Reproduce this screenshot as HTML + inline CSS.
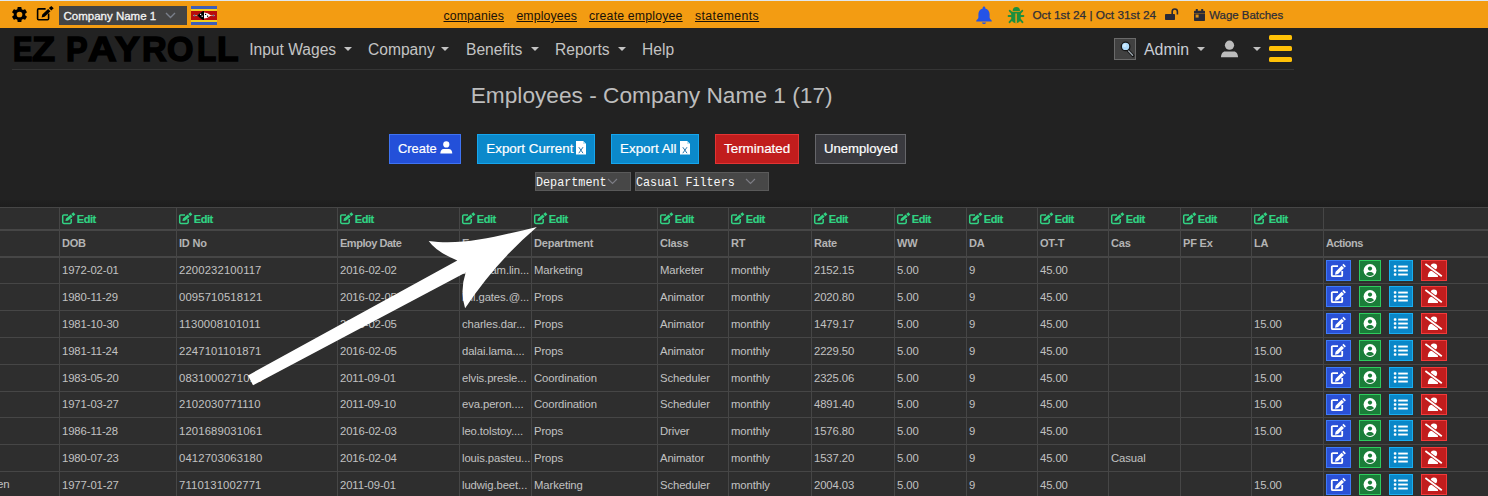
<!DOCTYPE html>
<html><head><meta charset="utf-8"><style>
html,body{margin:0;padding:0;width:1488px;height:496px;overflow:hidden;background:#222;}
body{position:relative;font-family:'Liberation Sans', sans-serif;}
.t{position:absolute;white-space:pre;}
.r{position:absolute;}
svg.r{overflow:visible;}
</style></head><body>
<div class="r" style="left:0px;top:0px;width:1488px;height:1px;background:#dfe7ef"></div>
<div class="r" style="left:0px;top:1px;width:1488px;height:27px;background:#f39c12"></div>
<svg class="r" style="left:9.85px;top:4.5px" width="19" height="19" viewBox="0 0 24 24"><path fill="#000" d="M19.14 12.94c.04-.3.06-.61.06-.94 0-.32-.02-.64-.07-.94l2.03-1.58a.49.49 0 0 0 .12-.61l-1.92-3.32a.49.49 0 0 0-.59-.22l-2.39.96c-.5-.38-1.03-.7-1.62-.94l-.36-2.54a.48.48 0 0 0-.48-.41h-3.84c-.24 0-.43.17-.47.41l-.36 2.54c-.59.24-1.13.57-1.62.94l-2.39-.96a.48.48 0 0 0-.59.22L2.74 8.87c-.12.21-.08.47.12.61l2.03 1.58c-.05.3-.09.63-.09.94s.02.64.07.94l-2.03 1.58a.49.49 0 0 0-.12.61l1.92 3.32c.12.22.37.29.59.22l2.39-.96c.5.38 1.03.7 1.62.94l.36 2.54c.05.24.24.41.48.41h3.84c.24 0 .44-.17.47-.41l.36-2.54c.59-.24 1.13-.56 1.62-.94l2.39.96c.22.08.47 0 .59-.22l1.92-3.32c.12-.22.07-.47-.12-.61l-2.01-1.58zM12 15.6A3.6 3.6 0 1 1 12 8.4a3.6 3.6 0 0 1 0 7.2z"/></svg>
<svg class="r" style="left:36px;top:5px" width="18" height="17" viewBox="0 0 18 17"><path fill="none" stroke="#000" stroke-width="1.6" d="M9.6 3.9H2.6a1 1 0 0 0-1 1V13.8a1 1 0 0 0 1 1H11.6a1 1 0 0 0 1-1V8.6"/><path fill="#000" d="M5.6 12.4L6.29 9.38L12.1 3.9L14.5 6.3L8.65 11.82Z M12.9 3.1L15.3 0.9L17.7 3.3L15.3 5.5Z"/></svg>
<div class="r" style="left:59px;top:6px;width:128px;height:19px;background:#444444"></div>
<div class="t" style="left:63.5px;top:9.59px;font-size:11.5px;line-height:12.846px;color:#f4f4f4;font-weight:normal;font-family:'Liberation Sans', sans-serif;-webkit-text-stroke:0.3px #f4f4f4;">Company Name 1</div>
<svg class="r" style="left:165px;top:12px" width="11" height="7" viewBox="0 0 11 7"><path d="M1 1l4.5 4.5L10 1" fill="none" stroke="#7a7f8a" stroke-width="1.4"/></svg>
<svg class="r" style="left:191px;top:6px" width="26" height="19" viewBox="0 0 26 19"><rect width="26" height="19" fill="#3e5eb9"/><rect y="3" width="26" height="13" fill="#f0cc20"/><rect y="5" width="26" height="9" fill="#b80c0c"/><line x1="2" y1="9.5" x2="24" y2="9.5" stroke="#d8a868" stroke-width="0.9"/><circle cx="3.5" cy="9.5" r="0.9" fill="#5a6aa8"/><circle cx="22.5" cy="9.5" r="0.9" fill="#5a6aa8"/><path d="M6 9.5Q13 3.6 20 9.5Q13 15.4 6 9.5z" fill="#fff"/><path d="M6 9.5Q13 3.6 13 5.4V13.6Q13 15.4 6 9.5z" fill="#000"/><g fill="#000"><rect x="14" y="7.8" width="1.2" height="1.2"/><rect x="16" y="9.6" width="1.2" height="1.2"/></g><g fill="#fff"><rect x="9" y="7.8" width="1.2" height="1.2"/><rect x="10.6" y="9.6" width="1.2" height="1.2"/></g></svg>
<div class="t" style="left:443.5px;top:10.07px;font-size:12.3px;line-height:13.739px;color:#1a1208;font-weight:normal;font-family:'Liberation Sans', sans-serif;text-decoration:underline;text-underline-offset:0.5px;letter-spacing:0.12px;">companies</div>
<div class="t" style="left:516.4px;top:10.07px;font-size:12.3px;line-height:13.739px;color:#1a1208;font-weight:normal;font-family:'Liberation Sans', sans-serif;text-decoration:underline;text-underline-offset:0.5px;letter-spacing:0.12px;">employees</div>
<div class="t" style="left:589px;top:10.07px;font-size:12.3px;line-height:13.739px;color:#1a1208;font-weight:normal;font-family:'Liberation Sans', sans-serif;text-decoration:underline;text-underline-offset:0.5px;letter-spacing:0.18px;">create employee</div>
<div class="t" style="left:695px;top:10.07px;font-size:12.3px;line-height:13.739px;color:#1a1208;font-weight:normal;font-family:'Liberation Sans', sans-serif;text-decoration:underline;text-underline-offset:0.5px;letter-spacing:0.4px;">statements</div>
<svg class="r" style="left:976px;top:6px" width="16" height="18" viewBox="0 0 16 18"><path fill="#2453e8" d="M8 0.5c.8 0 1.3.6 1.3 1.3v.6c2.6.6 4.3 2.9 4.3 5.6v3.2c0 .9.6 1.9 1.6 2.7.4.3.6.6.6 1v.6H0.2v-.6c0-.4.2-.7.6-1 1-.8 1.6-1.8 1.6-2.7V8c0-2.7 1.7-5 4.3-5.6v-.6C6.7 1.1 7.2.5 8 .5z M5.9 16.4h4.2c0 .9-.9 1.5-2.1 1.5s-2.1-.6-2.1-1.5z"/></svg>
<svg class="r" style="left:1004px;top:4px" width="24" height="22" viewBox="0 0 24 22"><g fill="#1e8f3e"><path d="M8.7 6.9A3.65 3.9 0 0 1 16 6.9Z"/><path d="M7.2 7.8H16.8V13.5C16.8 17 14.8 19.2 12 19.2C9.2 19.2 7.2 17 7.2 13.5Z"/></g><path d="M11.35 9.6h1.5v9.6h-1.5z" fill="#e99a18"/><g stroke="#1e8f3e" stroke-width="1.9" stroke-linecap="round" fill="none"><path d="M8 9.2L5.8 6.8M16 9.2L18.2 6.8M7.2 12H4.6M16.8 12H19.4M8 15.4L5.6 18.2M16 15.4L18.4 18.2"/></g></svg>
<div class="t" style="left:1032.4px;top:8.82px;font-size:11.8px;line-height:13.181px;color:#2e2e38;font-weight:normal;font-family:'Liberation Sans', sans-serif;-webkit-text-stroke:0.25px #2e2e38;">Oct 1st 24 | Oct 31st 24</div>
<svg class="r" style="left:1165px;top:8px" width="14" height="13" viewBox="0 0 14 13"><path fill="none" stroke="#2a2a36" stroke-width="1.6" d="M7.2 6.2V3.6a2.6 2.6 0 0 1 5.2 0V6.6"/><rect x="0" y="6" width="10" height="6" rx=".8" fill="#2a2a36"/></svg>
<svg class="r" style="left:1194px;top:8.5px" width="11" height="12" viewBox="0 0 11 12"><g fill="#2a2a36"><rect x="1.8" y="0" width="2" height="2.6"/><rect x="7.2" y="0" width="2" height="2.6"/><path d="M0.8 1.8h9.4a.8.8 0 0 1 .8.8v8.6a.8.8 0 0 1-.8.8H.8a.8.8 0 0 1-.8-.8V2.6a.8.8 0 0 1 .8-.8z"/></g><rect x="1.6" y="5.6" width="3" height="3" fill="#f39c12" opacity="0.9"/><rect x="0" y="4" width="11" height="0.7" fill="#f39c12" opacity="0.5"/></svg>
<div class="t" style="left:1209.2px;top:8.64px;font-size:11.45px;line-height:12.790px;color:#2e2e38;font-weight:normal;font-family:'Liberation Sans', sans-serif;-webkit-text-stroke:0.25px #2e2e38;">Wage Batches</div>
<div class="r" style="left:0px;top:28px;width:1488px;height:468px;background:#222222"></div>
<div class='t' style='left:13.46px;top:29.8px;font-size:35.5px;line-height:39.65px;font-weight:bold;color:#000;-webkit-text-stroke:1.5px #000;transform:scaleX(0.819);transform-origin:0 0'>E</div>
<div class='t' style='left:32.43px;top:29.8px;font-size:35.5px;line-height:39.65px;font-weight:bold;color:#000;-webkit-text-stroke:1.5px #000;transform:scaleX(1.065);transform-origin:0 0'>Z</div>
<div class='t' style='left:65.97px;top:29.8px;font-size:35.5px;line-height:39.65px;font-weight:bold;color:#000;-webkit-text-stroke:1.5px #000;transform:scaleX(0.914);transform-origin:0 0'>P</div>
<div class='t' style='left:87.98px;top:29.8px;font-size:35.5px;line-height:39.65px;font-weight:bold;color:#000;-webkit-text-stroke:1.5px #000;transform:scaleX(1.12);transform-origin:0 0'>A</div>
<div class='t' style='left:115px;top:29.8px;font-size:35.5px;line-height:39.65px;font-weight:bold;color:#000;-webkit-text-stroke:1.5px #000;transform:scaleX(1.05);transform-origin:0 0'>Y</div>
<div class='t' style='left:142.07px;top:29.8px;font-size:35.5px;line-height:39.65px;font-weight:bold;color:#000;-webkit-text-stroke:1.5px #000;transform:scaleX(0.965);transform-origin:0 0'>R</div>
<div class='t' style='left:167.34px;top:29.8px;font-size:35.5px;line-height:39.65px;font-weight:bold;color:#000;-webkit-text-stroke:1.5px #000;transform:scaleX(0.958);transform-origin:0 0'>O</div>
<div class='t' style='left:197.42px;top:29.8px;font-size:35.5px;line-height:39.65px;font-weight:bold;color:#000;-webkit-text-stroke:1.5px #000;transform:scaleX(0.889);transform-origin:0 0'>L</div>
<div class='t' style='left:217.01px;top:29.8px;font-size:35.5px;line-height:39.65px;font-weight:bold;color:#000;-webkit-text-stroke:1.5px #000;transform:scaleX(0.995);transform-origin:0 0'>L</div>
<div class="r" style="left:12px;top:69px;width:1282px;height:1px;background:#353535"></div>
<div class="t" style="left:249.2px;top:40.88px;font-size:15.6px;line-height:17.425px;color:#c4c4c4;font-weight:normal;font-family:'Liberation Sans', sans-serif;">Input Wages</div>
<svg class="r" style="left:343.5px;top:47px" width="8" height="4" viewBox="0 0 8 4"><path d="M0 0H8L4.0 4z" fill="#c4c4c4"/></svg>
<div class="t" style="left:368px;top:40.88px;font-size:15.6px;line-height:17.425px;color:#c4c4c4;font-weight:normal;font-family:'Liberation Sans', sans-serif;">Company</div>
<svg class="r" style="left:441px;top:47px" width="8" height="4" viewBox="0 0 8 4"><path d="M0 0H8L4.0 4z" fill="#c4c4c4"/></svg>
<div class="t" style="left:466px;top:40.88px;font-size:15.6px;line-height:17.425px;color:#c4c4c4;font-weight:normal;font-family:'Liberation Sans', sans-serif;">Benefits</div>
<svg class="r" style="left:531px;top:47px" width="8" height="4" viewBox="0 0 8 4"><path d="M0 0H8L4.0 4z" fill="#c4c4c4"/></svg>
<div class="t" style="left:555px;top:40.88px;font-size:15.6px;line-height:17.425px;color:#c4c4c4;font-weight:normal;font-family:'Liberation Sans', sans-serif;">Reports</div>
<svg class="r" style="left:618px;top:47px" width="8" height="4" viewBox="0 0 8 4"><path d="M0 0H8L4.0 4z" fill="#c4c4c4"/></svg>
<div class="t" style="left:642px;top:40.88px;font-size:15.6px;line-height:17.425px;color:#c4c4c4;font-weight:normal;font-family:'Liberation Sans', sans-serif;">Help</div>
<div class="r" style="left:1114px;top:38px;width:22px;height:22px;background:#414141;box-sizing:border-box;border:1px solid #6a6a6a"></div>
<svg class="r" style="left:1114px;top:38px" width="22" height="22" viewBox="0 0 22 22"><line x1="14.2" y1="12.6" x2="19" y2="17.6" stroke="#151515" stroke-width="3" stroke-linecap="round"/><line x1="14.2" y1="12.6" x2="18.6" y2="17.2" stroke="#9aa4ac" stroke-width="1.4" stroke-linecap="round"/><circle cx="11.6" cy="8.4" r="4.3" fill="#b0dcfc" stroke="#151515" stroke-width="1.3"/><circle cx="10.6" cy="7.4" r="1.6" fill="#e0f2ff" opacity=".7"/></svg>
<div class="t" style="left:1144px;top:40.61px;font-size:15.9px;line-height:17.760px;color:#c8ccd4;font-weight:normal;font-family:'Liberation Sans', sans-serif;">Admin</div>
<svg class="r" style="left:1197px;top:47px" width="8" height="4" viewBox="0 0 8 4"><path d="M0 0H8L4.0 4z" fill="#c0c0c0"/></svg>
<svg class="r" style="left:1221px;top:40px" width="17" height="18" viewBox="0 0 17 18"><circle cx="8.5" cy="5.2" r="4.6" fill="#bcbcbc"/><path d="M0 17.2c0-3.4 1.8-5.8 4-5.8h9c2.2 0 4 2.4 4 5.8z" fill="#bcbcbc"/></svg>
<svg class="r" style="left:1253px;top:47px" width="8" height="4" viewBox="0 0 8 4"><path d="M0 0H8L4.0 4z" fill="#c0c0c0"/></svg>
<div class="r" style="left:1269px;top:35.2px;width:23px;height:4.6px;background:#ffc107;border-radius:1.5px"></div>
<div class="r" style="left:1269px;top:46.3px;width:23px;height:4.6px;background:#ffc107;border-radius:1.5px"></div>
<div class="r" style="left:1269px;top:57.3px;width:23px;height:4.6px;background:#ffc107;border-radius:1.5px"></div>
<div class="t" style="left:470.7px;top:83.06px;font-size:22.7px;line-height:25.356px;color:#bdbdbd;font-weight:normal;font-family:'Liberation Sans', sans-serif;">Employees - Company Name 1 (17)</div>
<div class="r" style="left:389px;top:134px;width:72px;height:30px;background:#2350d9;box-sizing:border-box;border:1px solid #3f73f2"></div>
<div class="t" style="left:398px;top:142.33px;font-size:12.9px;line-height:14.409px;color:#fff;font-weight:normal;font-family:'Liberation Sans', sans-serif;-webkit-text-stroke:0.2px #fff;">Create</div>
<svg class="r" style="left:440px;top:141px" width="13" height="13" viewBox="0 0 13 13"><circle cx="6.3" cy="3.4" r="3.1" fill="#fff"/><path d="M0.3 12.6c0-2.8 1.4-4.6 3.4-4.6h5.2c2 0 3.4 1.8 3.4 4.6z" fill="#fff"/></svg>
<div class="r" style="left:477px;top:134px;width:118px;height:30px;background:#0b89cb;box-sizing:border-box;border:1px solid #15a6ee"></div>
<div class="t" style="left:486.3px;top:141.87px;font-size:13.4px;line-height:14.968px;color:#fff;font-weight:normal;font-family:'Liberation Sans', sans-serif;-webkit-text-stroke:0.2px #fff;">Export Current</div>
<svg class="r" style="left:576.3px;top:141.4px" width="10" height="13.5" viewBox="0 0 10 13.5"><path d="M0 0h7L10 3v10.5H0z" fill="#fff"/><path d="M7 0v3h3" fill="#bfe6f5"/><path d="M2.8 6.2l4.2 6M7 6.2L2.8 12.2" stroke="#2b78ad" stroke-width="1"/></svg>
<div class="r" style="left:611px;top:134px;width:88px;height:30px;background:#0b89cb;box-sizing:border-box;border:1px solid #15a6ee"></div>
<div class="t" style="left:620px;top:141.87px;font-size:13.4px;line-height:14.968px;color:#fff;font-weight:normal;font-family:'Liberation Sans', sans-serif;-webkit-text-stroke:0.2px #fff;">Export All</div>
<svg class="r" style="left:680.3px;top:141.4px" width="10" height="13.5" viewBox="0 0 10 13.5"><path d="M0 0h7L10 3v10.5H0z" fill="#fff"/><path d="M7 0v3h3" fill="#bfe6f5"/><path d="M2.8 6.2l4.2 6M7 6.2L2.8 12.2" stroke="#2b78ad" stroke-width="1"/></svg>
<div class="r" style="left:715px;top:134px;width:84px;height:30px;background:#c11d1d;box-sizing:border-box;border:1px solid #e33434"></div>
<div class="t" style="left:724px;top:141.87px;font-size:13.4px;line-height:14.968px;color:#fff;font-weight:normal;font-family:'Liberation Sans', sans-serif;-webkit-text-stroke:0.2px #fff;">Terminated</div>
<div class="r" style="left:815px;top:134px;width:91px;height:30px;background:#3a3a3f;box-sizing:border-box;border:1px solid #66666a"></div>
<div class="t" style="left:824px;top:142.10px;font-size:13.15px;line-height:14.689px;color:#fff;font-weight:normal;font-family:'Liberation Sans', sans-serif;-webkit-text-stroke:0.2px #fff;">Unemployed</div>
<div class="r" style="left:535px;top:172px;width:96px;height:19px;background:#474747;box-sizing:border-box;border:1px solid #5a5a5a"></div>
<div class="t" style="left:536px;top:174.83px;font-size:13.3px;line-height:15.066px;color:#f8f8f8;font-weight:normal;font-family:'Liberation Mono', monospace;transform:scaleX(0.884);transform-origin:0 0;">Department</div>
<svg class="r" style="left:607px;top:178px" width="11" height="7" viewBox="0 0 11 7"><path d="M1 1l4.5 4.5L10 1" fill="none" stroke="#7d7d85" stroke-width="1.2"/></svg>
<div class="r" style="left:635px;top:172px;width:134px;height:19px;background:#474747;box-sizing:border-box;border:1px solid #5a5a5a"></div>
<div class="t" style="left:636.2px;top:174.83px;font-size:13.3px;line-height:15.066px;color:#f8f8f8;font-weight:normal;font-family:'Liberation Mono', monospace;transform:scaleX(0.884);transform-origin:0 0;">Casual Filters</div>
<svg class="r" style="left:745px;top:178px" width="11" height="7" viewBox="0 0 11 7"><path d="M1 1l4.5 4.5L10 1" fill="none" stroke="#7d7d85" stroke-width="1.2"/></svg>
<div class="r" style="left:0px;top:200px;width:1488px;height:7px;background:linear-gradient(#212121,#1d1d1d)"></div>
<div class="r" style="left:0px;top:207px;width:1488px;height:289px;background:#2e2e2e"></div>
<div class="r" style="left:0px;top:207px;width:1488px;height:1px;background:#464646"></div>
<div class="r" style="left:0px;top:229px;width:1488px;height:2px;background:#464646"></div>
<div class="r" style="left:0px;top:256px;width:1488px;height:2px;background:#464646"></div>
<div class="r" style="left:0px;top:283px;width:1488px;height:1px;background:#464646"></div>
<div class="r" style="left:0px;top:310px;width:1488px;height:1px;background:#464646"></div>
<div class="r" style="left:0px;top:337px;width:1488px;height:1px;background:#464646"></div>
<div class="r" style="left:0px;top:364px;width:1488px;height:1px;background:#464646"></div>
<div class="r" style="left:0px;top:391px;width:1488px;height:1px;background:#464646"></div>
<div class="r" style="left:0px;top:417px;width:1488px;height:1px;background:#464646"></div>
<div class="r" style="left:0px;top:444px;width:1488px;height:1px;background:#464646"></div>
<div class="r" style="left:0px;top:471px;width:1488px;height:1px;background:#464646"></div>
<div class="r" style="left:59px;top:207px;width:1px;height:289px;background:#464646"></div>
<div class="r" style="left:176px;top:207px;width:1px;height:289px;background:#464646"></div>
<div class="r" style="left:337px;top:207px;width:1px;height:289px;background:#464646"></div>
<div class="r" style="left:459px;top:207px;width:1px;height:289px;background:#464646"></div>
<div class="r" style="left:531px;top:207px;width:1px;height:289px;background:#464646"></div>
<div class="r" style="left:657px;top:207px;width:1px;height:289px;background:#464646"></div>
<div class="r" style="left:728px;top:207px;width:1px;height:289px;background:#464646"></div>
<div class="r" style="left:811px;top:207px;width:1px;height:289px;background:#464646"></div>
<div class="r" style="left:894px;top:207px;width:1px;height:289px;background:#464646"></div>
<div class="r" style="left:966px;top:207px;width:1px;height:289px;background:#464646"></div>
<div class="r" style="left:1037px;top:207px;width:1px;height:289px;background:#464646"></div>
<div class="r" style="left:1108px;top:207px;width:1px;height:289px;background:#464646"></div>
<div class="r" style="left:1180px;top:207px;width:1px;height:289px;background:#464646"></div>
<div class="r" style="left:1251px;top:207px;width:1px;height:289px;background:#464646"></div>
<div class="r" style="left:1323px;top:207px;width:1px;height:289px;background:#464646"></div>
<svg class="r" style="left:62px;top:212px" width="14" height="12" viewBox="0 0 14 12"><path fill="none" stroke="#31d283" stroke-width="1.5" d="M6 2.9H1.9a1.2 1.2 0 0 0-1.2 1.2V10.2a1.2 1.2 0 0 0 1.2 1.2H8a1.2 1.2 0 0 0 1.2-1.2V7"/><g transform="translate(0 0.5)"><path fill="#31d283" d="M3.4 8.4L3.96 5.96L8.69 1.96L10.63 4.26L5.9 8.26Z M9.31 1.45L11.43-0.35L13.37 1.95L11.25 3.75Z"/></g></svg>
<div class="t" style="left:76.8px;top:212.54px;font-size:11px;line-height:12.287px;color:#31d283;font-weight:bold;font-family:'Liberation Sans', sans-serif;letter-spacing:-0.45px;-webkit-text-stroke:0.2px #31d283;">Edit</div>
<svg class="r" style="left:179px;top:212px" width="14" height="12" viewBox="0 0 14 12"><path fill="none" stroke="#31d283" stroke-width="1.5" d="M6 2.9H1.9a1.2 1.2 0 0 0-1.2 1.2V10.2a1.2 1.2 0 0 0 1.2 1.2H8a1.2 1.2 0 0 0 1.2-1.2V7"/><g transform="translate(0 0.5)"><path fill="#31d283" d="M3.4 8.4L3.96 5.96L8.69 1.96L10.63 4.26L5.9 8.26Z M9.31 1.45L11.43-0.35L13.37 1.95L11.25 3.75Z"/></g></svg>
<div class="t" style="left:193.8px;top:212.54px;font-size:11px;line-height:12.287px;color:#31d283;font-weight:bold;font-family:'Liberation Sans', sans-serif;letter-spacing:-0.45px;-webkit-text-stroke:0.2px #31d283;">Edit</div>
<svg class="r" style="left:340px;top:212px" width="14" height="12" viewBox="0 0 14 12"><path fill="none" stroke="#31d283" stroke-width="1.5" d="M6 2.9H1.9a1.2 1.2 0 0 0-1.2 1.2V10.2a1.2 1.2 0 0 0 1.2 1.2H8a1.2 1.2 0 0 0 1.2-1.2V7"/><g transform="translate(0 0.5)"><path fill="#31d283" d="M3.4 8.4L3.96 5.96L8.69 1.96L10.63 4.26L5.9 8.26Z M9.31 1.45L11.43-0.35L13.37 1.95L11.25 3.75Z"/></g></svg>
<div class="t" style="left:354.8px;top:212.54px;font-size:11px;line-height:12.287px;color:#31d283;font-weight:bold;font-family:'Liberation Sans', sans-serif;letter-spacing:-0.45px;-webkit-text-stroke:0.2px #31d283;">Edit</div>
<svg class="r" style="left:462px;top:212px" width="14" height="12" viewBox="0 0 14 12"><path fill="none" stroke="#31d283" stroke-width="1.5" d="M6 2.9H1.9a1.2 1.2 0 0 0-1.2 1.2V10.2a1.2 1.2 0 0 0 1.2 1.2H8a1.2 1.2 0 0 0 1.2-1.2V7"/><g transform="translate(0 0.5)"><path fill="#31d283" d="M3.4 8.4L3.96 5.96L8.69 1.96L10.63 4.26L5.9 8.26Z M9.31 1.45L11.43-0.35L13.37 1.95L11.25 3.75Z"/></g></svg>
<div class="t" style="left:476.8px;top:212.54px;font-size:11px;line-height:12.287px;color:#31d283;font-weight:bold;font-family:'Liberation Sans', sans-serif;letter-spacing:-0.45px;-webkit-text-stroke:0.2px #31d283;">Edit</div>
<svg class="r" style="left:534px;top:212px" width="14" height="12" viewBox="0 0 14 12"><path fill="none" stroke="#31d283" stroke-width="1.5" d="M6 2.9H1.9a1.2 1.2 0 0 0-1.2 1.2V10.2a1.2 1.2 0 0 0 1.2 1.2H8a1.2 1.2 0 0 0 1.2-1.2V7"/><g transform="translate(0 0.5)"><path fill="#31d283" d="M3.4 8.4L3.96 5.96L8.69 1.96L10.63 4.26L5.9 8.26Z M9.31 1.45L11.43-0.35L13.37 1.95L11.25 3.75Z"/></g></svg>
<div class="t" style="left:548.8px;top:212.54px;font-size:11px;line-height:12.287px;color:#31d283;font-weight:bold;font-family:'Liberation Sans', sans-serif;letter-spacing:-0.45px;-webkit-text-stroke:0.2px #31d283;">Edit</div>
<svg class="r" style="left:660px;top:212px" width="14" height="12" viewBox="0 0 14 12"><path fill="none" stroke="#31d283" stroke-width="1.5" d="M6 2.9H1.9a1.2 1.2 0 0 0-1.2 1.2V10.2a1.2 1.2 0 0 0 1.2 1.2H8a1.2 1.2 0 0 0 1.2-1.2V7"/><g transform="translate(0 0.5)"><path fill="#31d283" d="M3.4 8.4L3.96 5.96L8.69 1.96L10.63 4.26L5.9 8.26Z M9.31 1.45L11.43-0.35L13.37 1.95L11.25 3.75Z"/></g></svg>
<div class="t" style="left:674.8px;top:212.54px;font-size:11px;line-height:12.287px;color:#31d283;font-weight:bold;font-family:'Liberation Sans', sans-serif;letter-spacing:-0.45px;-webkit-text-stroke:0.2px #31d283;">Edit</div>
<svg class="r" style="left:731px;top:212px" width="14" height="12" viewBox="0 0 14 12"><path fill="none" stroke="#31d283" stroke-width="1.5" d="M6 2.9H1.9a1.2 1.2 0 0 0-1.2 1.2V10.2a1.2 1.2 0 0 0 1.2 1.2H8a1.2 1.2 0 0 0 1.2-1.2V7"/><g transform="translate(0 0.5)"><path fill="#31d283" d="M3.4 8.4L3.96 5.96L8.69 1.96L10.63 4.26L5.9 8.26Z M9.31 1.45L11.43-0.35L13.37 1.95L11.25 3.75Z"/></g></svg>
<div class="t" style="left:745.8px;top:212.54px;font-size:11px;line-height:12.287px;color:#31d283;font-weight:bold;font-family:'Liberation Sans', sans-serif;letter-spacing:-0.45px;-webkit-text-stroke:0.2px #31d283;">Edit</div>
<svg class="r" style="left:814px;top:212px" width="14" height="12" viewBox="0 0 14 12"><path fill="none" stroke="#31d283" stroke-width="1.5" d="M6 2.9H1.9a1.2 1.2 0 0 0-1.2 1.2V10.2a1.2 1.2 0 0 0 1.2 1.2H8a1.2 1.2 0 0 0 1.2-1.2V7"/><g transform="translate(0 0.5)"><path fill="#31d283" d="M3.4 8.4L3.96 5.96L8.69 1.96L10.63 4.26L5.9 8.26Z M9.31 1.45L11.43-0.35L13.37 1.95L11.25 3.75Z"/></g></svg>
<div class="t" style="left:828.8px;top:212.54px;font-size:11px;line-height:12.287px;color:#31d283;font-weight:bold;font-family:'Liberation Sans', sans-serif;letter-spacing:-0.45px;-webkit-text-stroke:0.2px #31d283;">Edit</div>
<svg class="r" style="left:897px;top:212px" width="14" height="12" viewBox="0 0 14 12"><path fill="none" stroke="#31d283" stroke-width="1.5" d="M6 2.9H1.9a1.2 1.2 0 0 0-1.2 1.2V10.2a1.2 1.2 0 0 0 1.2 1.2H8a1.2 1.2 0 0 0 1.2-1.2V7"/><g transform="translate(0 0.5)"><path fill="#31d283" d="M3.4 8.4L3.96 5.96L8.69 1.96L10.63 4.26L5.9 8.26Z M9.31 1.45L11.43-0.35L13.37 1.95L11.25 3.75Z"/></g></svg>
<div class="t" style="left:911.8px;top:212.54px;font-size:11px;line-height:12.287px;color:#31d283;font-weight:bold;font-family:'Liberation Sans', sans-serif;letter-spacing:-0.45px;-webkit-text-stroke:0.2px #31d283;">Edit</div>
<svg class="r" style="left:969px;top:212px" width="14" height="12" viewBox="0 0 14 12"><path fill="none" stroke="#31d283" stroke-width="1.5" d="M6 2.9H1.9a1.2 1.2 0 0 0-1.2 1.2V10.2a1.2 1.2 0 0 0 1.2 1.2H8a1.2 1.2 0 0 0 1.2-1.2V7"/><g transform="translate(0 0.5)"><path fill="#31d283" d="M3.4 8.4L3.96 5.96L8.69 1.96L10.63 4.26L5.9 8.26Z M9.31 1.45L11.43-0.35L13.37 1.95L11.25 3.75Z"/></g></svg>
<div class="t" style="left:983.8px;top:212.54px;font-size:11px;line-height:12.287px;color:#31d283;font-weight:bold;font-family:'Liberation Sans', sans-serif;letter-spacing:-0.45px;-webkit-text-stroke:0.2px #31d283;">Edit</div>
<svg class="r" style="left:1040px;top:212px" width="14" height="12" viewBox="0 0 14 12"><path fill="none" stroke="#31d283" stroke-width="1.5" d="M6 2.9H1.9a1.2 1.2 0 0 0-1.2 1.2V10.2a1.2 1.2 0 0 0 1.2 1.2H8a1.2 1.2 0 0 0 1.2-1.2V7"/><g transform="translate(0 0.5)"><path fill="#31d283" d="M3.4 8.4L3.96 5.96L8.69 1.96L10.63 4.26L5.9 8.26Z M9.31 1.45L11.43-0.35L13.37 1.95L11.25 3.75Z"/></g></svg>
<div class="t" style="left:1054.8px;top:212.54px;font-size:11px;line-height:12.287px;color:#31d283;font-weight:bold;font-family:'Liberation Sans', sans-serif;letter-spacing:-0.45px;-webkit-text-stroke:0.2px #31d283;">Edit</div>
<svg class="r" style="left:1111px;top:212px" width="14" height="12" viewBox="0 0 14 12"><path fill="none" stroke="#31d283" stroke-width="1.5" d="M6 2.9H1.9a1.2 1.2 0 0 0-1.2 1.2V10.2a1.2 1.2 0 0 0 1.2 1.2H8a1.2 1.2 0 0 0 1.2-1.2V7"/><g transform="translate(0 0.5)"><path fill="#31d283" d="M3.4 8.4L3.96 5.96L8.69 1.96L10.63 4.26L5.9 8.26Z M9.31 1.45L11.43-0.35L13.37 1.95L11.25 3.75Z"/></g></svg>
<div class="t" style="left:1125.8px;top:212.54px;font-size:11px;line-height:12.287px;color:#31d283;font-weight:bold;font-family:'Liberation Sans', sans-serif;letter-spacing:-0.45px;-webkit-text-stroke:0.2px #31d283;">Edit</div>
<svg class="r" style="left:1183px;top:212px" width="14" height="12" viewBox="0 0 14 12"><path fill="none" stroke="#31d283" stroke-width="1.5" d="M6 2.9H1.9a1.2 1.2 0 0 0-1.2 1.2V10.2a1.2 1.2 0 0 0 1.2 1.2H8a1.2 1.2 0 0 0 1.2-1.2V7"/><g transform="translate(0 0.5)"><path fill="#31d283" d="M3.4 8.4L3.96 5.96L8.69 1.96L10.63 4.26L5.9 8.26Z M9.31 1.45L11.43-0.35L13.37 1.95L11.25 3.75Z"/></g></svg>
<div class="t" style="left:1197.8px;top:212.54px;font-size:11px;line-height:12.287px;color:#31d283;font-weight:bold;font-family:'Liberation Sans', sans-serif;letter-spacing:-0.45px;-webkit-text-stroke:0.2px #31d283;">Edit</div>
<svg class="r" style="left:1254px;top:212px" width="14" height="12" viewBox="0 0 14 12"><path fill="none" stroke="#31d283" stroke-width="1.5" d="M6 2.9H1.9a1.2 1.2 0 0 0-1.2 1.2V10.2a1.2 1.2 0 0 0 1.2 1.2H8a1.2 1.2 0 0 0 1.2-1.2V7"/><g transform="translate(0 0.5)"><path fill="#31d283" d="M3.4 8.4L3.96 5.96L8.69 1.96L10.63 4.26L5.9 8.26Z M9.31 1.45L11.43-0.35L13.37 1.95L11.25 3.75Z"/></g></svg>
<div class="t" style="left:1268.8px;top:212.54px;font-size:11px;line-height:12.287px;color:#31d283;font-weight:bold;font-family:'Liberation Sans', sans-serif;letter-spacing:-0.45px;-webkit-text-stroke:0.2px #31d283;">Edit</div>
<div class="t" style="left:62px;top:237.24px;font-size:11px;line-height:12.287px;color:#b4b4b4;font-weight:bold;font-family:'Liberation Sans', sans-serif;letter-spacing:-0.2px;">DOB</div>
<div class="t" style="left:179px;top:237.24px;font-size:11px;line-height:12.287px;color:#b4b4b4;font-weight:bold;font-family:'Liberation Sans', sans-serif;letter-spacing:-0.2px;">ID No</div>
<div class="t" style="left:340px;top:237.24px;font-size:11px;line-height:12.287px;color:#b4b4b4;font-weight:bold;font-family:'Liberation Sans', sans-serif;letter-spacing:-0.47px;">Employ Date</div>
<div class="t" style="left:462px;top:237.24px;font-size:11px;line-height:12.287px;color:#b4b4b4;font-weight:bold;font-family:'Liberation Sans', sans-serif;letter-spacing:-0.2px;">Email</div>
<div class="t" style="left:534px;top:237.24px;font-size:11px;line-height:12.287px;color:#b4b4b4;font-weight:bold;font-family:'Liberation Sans', sans-serif;letter-spacing:-0.2px;">Department</div>
<div class="t" style="left:660px;top:237.24px;font-size:11px;line-height:12.287px;color:#b4b4b4;font-weight:bold;font-family:'Liberation Sans', sans-serif;letter-spacing:-0.2px;">Class</div>
<div class="t" style="left:731px;top:237.24px;font-size:11px;line-height:12.287px;color:#b4b4b4;font-weight:bold;font-family:'Liberation Sans', sans-serif;letter-spacing:-0.2px;">RT</div>
<div class="t" style="left:814px;top:237.24px;font-size:11px;line-height:12.287px;color:#b4b4b4;font-weight:bold;font-family:'Liberation Sans', sans-serif;letter-spacing:-0.2px;">Rate</div>
<div class="t" style="left:897px;top:237.24px;font-size:11px;line-height:12.287px;color:#b4b4b4;font-weight:bold;font-family:'Liberation Sans', sans-serif;letter-spacing:-0.2px;">WW</div>
<div class="t" style="left:969px;top:237.24px;font-size:11px;line-height:12.287px;color:#b4b4b4;font-weight:bold;font-family:'Liberation Sans', sans-serif;letter-spacing:-0.2px;">DA</div>
<div class="t" style="left:1040px;top:237.24px;font-size:11px;line-height:12.287px;color:#b4b4b4;font-weight:bold;font-family:'Liberation Sans', sans-serif;letter-spacing:-0.2px;">OT-T</div>
<div class="t" style="left:1111px;top:237.24px;font-size:11px;line-height:12.287px;color:#b4b4b4;font-weight:bold;font-family:'Liberation Sans', sans-serif;letter-spacing:-0.2px;">Cas</div>
<div class="t" style="left:1183px;top:237.24px;font-size:11px;line-height:12.287px;color:#b4b4b4;font-weight:bold;font-family:'Liberation Sans', sans-serif;letter-spacing:-0.2px;">PF Ex</div>
<div class="t" style="left:1254px;top:237.24px;font-size:11px;line-height:12.287px;color:#b4b4b4;font-weight:bold;font-family:'Liberation Sans', sans-serif;letter-spacing:-0.2px;">LA</div>
<div class="t" style="left:1326px;top:237.24px;font-size:11px;line-height:12.287px;color:#b4b4b4;font-weight:bold;font-family:'Liberation Sans', sans-serif;letter-spacing:-0.5px;">Actions</div>
<div class="t" style="left:62px;top:263.67px;font-size:11.3px;line-height:12.622px;color:#c2c2c2;font-weight:normal;font-family:'Liberation Sans', sans-serif;letter-spacing:-0.1px;">1972-02-01</div>
<div class="t" style="left:179px;top:263.67px;font-size:11.3px;line-height:12.622px;color:#c2c2c2;font-weight:normal;font-family:'Liberation Sans', sans-serif;letter-spacing:0.13px;">2200232100117</div>
<div class="t" style="left:340px;top:263.67px;font-size:11.3px;line-height:12.622px;color:#c2c2c2;font-weight:normal;font-family:'Liberation Sans', sans-serif;letter-spacing:-0.1px;">2016-02-02</div>
<div class="t" style="left:462px;top:263.67px;font-size:11.3px;line-height:12.622px;color:#c2c2c2;font-weight:normal;font-family:'Liberation Sans', sans-serif;letter-spacing:-0.1px;">abraham.lin...</div>
<div class="t" style="left:534px;top:263.67px;font-size:11.3px;line-height:12.622px;color:#c2c2c2;font-weight:normal;font-family:'Liberation Sans', sans-serif;letter-spacing:-0.1px;">Marketing</div>
<div class="t" style="left:660px;top:263.67px;font-size:11.3px;line-height:12.622px;color:#c2c2c2;font-weight:normal;font-family:'Liberation Sans', sans-serif;letter-spacing:-0.1px;">Marketer</div>
<div class="t" style="left:731px;top:263.67px;font-size:11.3px;line-height:12.622px;color:#c2c2c2;font-weight:normal;font-family:'Liberation Sans', sans-serif;letter-spacing:-0.1px;">monthly</div>
<div class="t" style="left:814px;top:263.67px;font-size:11.3px;line-height:12.622px;color:#c2c2c2;font-weight:normal;font-family:'Liberation Sans', sans-serif;letter-spacing:-0.1px;">2152.15</div>
<div class="t" style="left:897px;top:263.67px;font-size:11.3px;line-height:12.622px;color:#c2c2c2;font-weight:normal;font-family:'Liberation Sans', sans-serif;letter-spacing:-0.1px;">5.00</div>
<div class="t" style="left:969px;top:263.67px;font-size:11.3px;line-height:12.622px;color:#c2c2c2;font-weight:normal;font-family:'Liberation Sans', sans-serif;letter-spacing:-0.1px;">9</div>
<div class="t" style="left:1040px;top:263.67px;font-size:11.3px;line-height:12.622px;color:#c2c2c2;font-weight:normal;font-family:'Liberation Sans', sans-serif;letter-spacing:-0.1px;">45.00</div>
<div class="r" style="left:1326px;top:260px;width:25px;height:21px;box-sizing:border-box;background:#2a50d6;border:1px solid #3e7af8"></div>
<div class="r" style="left:1359px;top:260px;width:22px;height:21px;box-sizing:border-box;background:#1a7d39;border:1px solid #2ecc5e"></div>
<div class="r" style="left:1389px;top:260px;width:24px;height:21px;box-sizing:border-box;background:#0a87c8;border:1px solid #18aef0"></div>
<div class="r" style="left:1421px;top:260px;width:26px;height:21px;box-sizing:border-box;background:#c11d1d;border:1px solid #f03a3a"></div>
<svg class="r" style="left:1330px;top:263px" width="17" height="15" viewBox="0 0 17 15"><path fill="none" stroke="#fff" stroke-width="1.8" d="M8 3.2H2.8a1 1 0 0 0-1 1V12.2a1 1 0 0 0 1 1H11.2a1 1 0 0 0 1-1V8"/><path fill="#fff" d="M13.5 0.8l2.4 2.4-1.2 1.2-2.4-2.4z M11.6 2.7l2.4 2.4-6 6-3 .6.6-3z"/></svg>
<svg class="r" style="left:1363px;top:263px" width="14" height="15" viewBox="0 0 14 15"><circle cx="7" cy="7.5" r="6.4" fill="#fff"/><circle cx="7" cy="5.6" r="2.1" fill="#1a7d39"/><path d="M3 11.2c.8-1.6 2.3-2.2 4-2.2s3.2.6 4 2.2a5.4 5.4 0 0 1-8 0z" fill="#1a7d39"/></svg>
<svg class="r" style="left:1393px;top:263.5px" width="16" height="13" viewBox="0 0 16 13"><g fill="#fff"><rect x="0.8" y="1.2" width="2.6" height="2.6" rx=".8"/><rect x="0.8" y="5.2" width="2.6" height="2.6" rx=".8"/><rect x="0.8" y="9.2" width="2.6" height="2.6" rx=".8"/><rect x="5.2" y="1.6" width="9.6" height="1.9"/><rect x="5.2" y="5.6" width="9.6" height="1.9"/><rect x="5.2" y="9.6" width="9.6" height="1.9"/></g></svg>
<svg class="r" style="left:1424px;top:263px" width="20" height="15" viewBox="0 0 20 15"><circle cx="9.9" cy="3.6" r="3.2" fill="#fff"/><path d="M3.8 14c0-3.6 1.6-6.2 4-6.2h2.2c2.4 0 4 2.6 4 6.2z" fill="#fff"/><line x1="0.6" y1="0.4" x2="18.4" y2="13.6" stroke="#c11d1d" stroke-width="3.6"/><line x1="1.4" y1="1.0" x2="17.8" y2="13.2" stroke="#fff" stroke-width="1.8"/></svg>
<div class="t" style="left:62px;top:290.57px;font-size:11.3px;line-height:12.622px;color:#c2c2c2;font-weight:normal;font-family:'Liberation Sans', sans-serif;letter-spacing:-0.1px;">1980-11-29</div>
<div class="t" style="left:179px;top:290.57px;font-size:11.3px;line-height:12.622px;color:#c2c2c2;font-weight:normal;font-family:'Liberation Sans', sans-serif;letter-spacing:0.13px;">0095710518121</div>
<div class="t" style="left:340px;top:290.57px;font-size:11.3px;line-height:12.622px;color:#c2c2c2;font-weight:normal;font-family:'Liberation Sans', sans-serif;letter-spacing:-0.1px;">2016-02-05</div>
<div class="t" style="left:462px;top:290.57px;font-size:11.3px;line-height:12.622px;color:#c2c2c2;font-weight:normal;font-family:'Liberation Sans', sans-serif;letter-spacing:-0.1px;">bill.gates.@...</div>
<div class="t" style="left:534px;top:290.57px;font-size:11.3px;line-height:12.622px;color:#c2c2c2;font-weight:normal;font-family:'Liberation Sans', sans-serif;letter-spacing:-0.1px;">Props</div>
<div class="t" style="left:660px;top:290.57px;font-size:11.3px;line-height:12.622px;color:#c2c2c2;font-weight:normal;font-family:'Liberation Sans', sans-serif;letter-spacing:-0.1px;">Animator</div>
<div class="t" style="left:731px;top:290.57px;font-size:11.3px;line-height:12.622px;color:#c2c2c2;font-weight:normal;font-family:'Liberation Sans', sans-serif;letter-spacing:-0.1px;">monthly</div>
<div class="t" style="left:814px;top:290.57px;font-size:11.3px;line-height:12.622px;color:#c2c2c2;font-weight:normal;font-family:'Liberation Sans', sans-serif;letter-spacing:-0.1px;">2020.80</div>
<div class="t" style="left:897px;top:290.57px;font-size:11.3px;line-height:12.622px;color:#c2c2c2;font-weight:normal;font-family:'Liberation Sans', sans-serif;letter-spacing:-0.1px;">5.00</div>
<div class="t" style="left:969px;top:290.57px;font-size:11.3px;line-height:12.622px;color:#c2c2c2;font-weight:normal;font-family:'Liberation Sans', sans-serif;letter-spacing:-0.1px;">9</div>
<div class="t" style="left:1040px;top:290.57px;font-size:11.3px;line-height:12.622px;color:#c2c2c2;font-weight:normal;font-family:'Liberation Sans', sans-serif;letter-spacing:-0.1px;">45.00</div>
<div class="r" style="left:1326px;top:286px;width:25px;height:21px;box-sizing:border-box;background:#2a50d6;border:1px solid #3e7af8"></div>
<div class="r" style="left:1359px;top:286px;width:22px;height:21px;box-sizing:border-box;background:#1a7d39;border:1px solid #2ecc5e"></div>
<div class="r" style="left:1389px;top:286px;width:24px;height:21px;box-sizing:border-box;background:#0a87c8;border:1px solid #18aef0"></div>
<div class="r" style="left:1421px;top:286px;width:26px;height:21px;box-sizing:border-box;background:#c11d1d;border:1px solid #f03a3a"></div>
<svg class="r" style="left:1330px;top:289px" width="17" height="15" viewBox="0 0 17 15"><path fill="none" stroke="#fff" stroke-width="1.8" d="M8 3.2H2.8a1 1 0 0 0-1 1V12.2a1 1 0 0 0 1 1H11.2a1 1 0 0 0 1-1V8"/><path fill="#fff" d="M13.5 0.8l2.4 2.4-1.2 1.2-2.4-2.4z M11.6 2.7l2.4 2.4-6 6-3 .6.6-3z"/></svg>
<svg class="r" style="left:1363px;top:289px" width="14" height="15" viewBox="0 0 14 15"><circle cx="7" cy="7.5" r="6.4" fill="#fff"/><circle cx="7" cy="5.6" r="2.1" fill="#1a7d39"/><path d="M3 11.2c.8-1.6 2.3-2.2 4-2.2s3.2.6 4 2.2a5.4 5.4 0 0 1-8 0z" fill="#1a7d39"/></svg>
<svg class="r" style="left:1393px;top:289.5px" width="16" height="13" viewBox="0 0 16 13"><g fill="#fff"><rect x="0.8" y="1.2" width="2.6" height="2.6" rx=".8"/><rect x="0.8" y="5.2" width="2.6" height="2.6" rx=".8"/><rect x="0.8" y="9.2" width="2.6" height="2.6" rx=".8"/><rect x="5.2" y="1.6" width="9.6" height="1.9"/><rect x="5.2" y="5.6" width="9.6" height="1.9"/><rect x="5.2" y="9.6" width="9.6" height="1.9"/></g></svg>
<svg class="r" style="left:1424px;top:289px" width="20" height="15" viewBox="0 0 20 15"><circle cx="9.9" cy="3.6" r="3.2" fill="#fff"/><path d="M3.8 14c0-3.6 1.6-6.2 4-6.2h2.2c2.4 0 4 2.6 4 6.2z" fill="#fff"/><line x1="0.6" y1="0.4" x2="18.4" y2="13.6" stroke="#c11d1d" stroke-width="3.6"/><line x1="1.4" y1="1.0" x2="17.8" y2="13.2" stroke="#fff" stroke-width="1.8"/></svg>
<div class="t" style="left:62px;top:317.57px;font-size:11.3px;line-height:12.622px;color:#c2c2c2;font-weight:normal;font-family:'Liberation Sans', sans-serif;letter-spacing:-0.1px;">1981-10-30</div>
<div class="t" style="left:179px;top:317.57px;font-size:11.3px;line-height:12.622px;color:#c2c2c2;font-weight:normal;font-family:'Liberation Sans', sans-serif;letter-spacing:0.13px;">1130008101011</div>
<div class="t" style="left:340px;top:317.57px;font-size:11.3px;line-height:12.622px;color:#c2c2c2;font-weight:normal;font-family:'Liberation Sans', sans-serif;letter-spacing:-0.1px;">2016-02-05</div>
<div class="t" style="left:462px;top:317.57px;font-size:11.3px;line-height:12.622px;color:#c2c2c2;font-weight:normal;font-family:'Liberation Sans', sans-serif;letter-spacing:-0.1px;">charles.dar...</div>
<div class="t" style="left:534px;top:317.57px;font-size:11.3px;line-height:12.622px;color:#c2c2c2;font-weight:normal;font-family:'Liberation Sans', sans-serif;letter-spacing:-0.1px;">Props</div>
<div class="t" style="left:660px;top:317.57px;font-size:11.3px;line-height:12.622px;color:#c2c2c2;font-weight:normal;font-family:'Liberation Sans', sans-serif;letter-spacing:-0.1px;">Animator</div>
<div class="t" style="left:731px;top:317.57px;font-size:11.3px;line-height:12.622px;color:#c2c2c2;font-weight:normal;font-family:'Liberation Sans', sans-serif;letter-spacing:-0.1px;">monthly</div>
<div class="t" style="left:814px;top:317.57px;font-size:11.3px;line-height:12.622px;color:#c2c2c2;font-weight:normal;font-family:'Liberation Sans', sans-serif;letter-spacing:-0.1px;">1479.17</div>
<div class="t" style="left:897px;top:317.57px;font-size:11.3px;line-height:12.622px;color:#c2c2c2;font-weight:normal;font-family:'Liberation Sans', sans-serif;letter-spacing:-0.1px;">5.00</div>
<div class="t" style="left:969px;top:317.57px;font-size:11.3px;line-height:12.622px;color:#c2c2c2;font-weight:normal;font-family:'Liberation Sans', sans-serif;letter-spacing:-0.1px;">9</div>
<div class="t" style="left:1040px;top:317.57px;font-size:11.3px;line-height:12.622px;color:#c2c2c2;font-weight:normal;font-family:'Liberation Sans', sans-serif;letter-spacing:-0.1px;">45.00</div>
<div class="t" style="left:1254px;top:317.57px;font-size:11.3px;line-height:12.622px;color:#c2c2c2;font-weight:normal;font-family:'Liberation Sans', sans-serif;letter-spacing:-0.1px;">15.00</div>
<div class="r" style="left:1326px;top:313px;width:25px;height:21px;box-sizing:border-box;background:#2a50d6;border:1px solid #3e7af8"></div>
<div class="r" style="left:1359px;top:313px;width:22px;height:21px;box-sizing:border-box;background:#1a7d39;border:1px solid #2ecc5e"></div>
<div class="r" style="left:1389px;top:313px;width:24px;height:21px;box-sizing:border-box;background:#0a87c8;border:1px solid #18aef0"></div>
<div class="r" style="left:1421px;top:313px;width:26px;height:21px;box-sizing:border-box;background:#c11d1d;border:1px solid #f03a3a"></div>
<svg class="r" style="left:1330px;top:316px" width="17" height="15" viewBox="0 0 17 15"><path fill="none" stroke="#fff" stroke-width="1.8" d="M8 3.2H2.8a1 1 0 0 0-1 1V12.2a1 1 0 0 0 1 1H11.2a1 1 0 0 0 1-1V8"/><path fill="#fff" d="M13.5 0.8l2.4 2.4-1.2 1.2-2.4-2.4z M11.6 2.7l2.4 2.4-6 6-3 .6.6-3z"/></svg>
<svg class="r" style="left:1363px;top:316px" width="14" height="15" viewBox="0 0 14 15"><circle cx="7" cy="7.5" r="6.4" fill="#fff"/><circle cx="7" cy="5.6" r="2.1" fill="#1a7d39"/><path d="M3 11.2c.8-1.6 2.3-2.2 4-2.2s3.2.6 4 2.2a5.4 5.4 0 0 1-8 0z" fill="#1a7d39"/></svg>
<svg class="r" style="left:1393px;top:316.5px" width="16" height="13" viewBox="0 0 16 13"><g fill="#fff"><rect x="0.8" y="1.2" width="2.6" height="2.6" rx=".8"/><rect x="0.8" y="5.2" width="2.6" height="2.6" rx=".8"/><rect x="0.8" y="9.2" width="2.6" height="2.6" rx=".8"/><rect x="5.2" y="1.6" width="9.6" height="1.9"/><rect x="5.2" y="5.6" width="9.6" height="1.9"/><rect x="5.2" y="9.6" width="9.6" height="1.9"/></g></svg>
<svg class="r" style="left:1424px;top:316px" width="20" height="15" viewBox="0 0 20 15"><circle cx="9.9" cy="3.6" r="3.2" fill="#fff"/><path d="M3.8 14c0-3.6 1.6-6.2 4-6.2h2.2c2.4 0 4 2.6 4 6.2z" fill="#fff"/><line x1="0.6" y1="0.4" x2="18.4" y2="13.6" stroke="#c11d1d" stroke-width="3.6"/><line x1="1.4" y1="1.0" x2="17.8" y2="13.2" stroke="#fff" stroke-width="1.8"/></svg>
<div class="t" style="left:62px;top:344.57px;font-size:11.3px;line-height:12.622px;color:#c2c2c2;font-weight:normal;font-family:'Liberation Sans', sans-serif;letter-spacing:-0.1px;">1981-11-24</div>
<div class="t" style="left:179px;top:344.57px;font-size:11.3px;line-height:12.622px;color:#c2c2c2;font-weight:normal;font-family:'Liberation Sans', sans-serif;letter-spacing:0.13px;">2247101101871</div>
<div class="t" style="left:340px;top:344.57px;font-size:11.3px;line-height:12.622px;color:#c2c2c2;font-weight:normal;font-family:'Liberation Sans', sans-serif;letter-spacing:-0.1px;">2016-02-05</div>
<div class="t" style="left:462px;top:344.57px;font-size:11.3px;line-height:12.622px;color:#c2c2c2;font-weight:normal;font-family:'Liberation Sans', sans-serif;letter-spacing:-0.1px;">dalai.lama....</div>
<div class="t" style="left:534px;top:344.57px;font-size:11.3px;line-height:12.622px;color:#c2c2c2;font-weight:normal;font-family:'Liberation Sans', sans-serif;letter-spacing:-0.1px;">Props</div>
<div class="t" style="left:660px;top:344.57px;font-size:11.3px;line-height:12.622px;color:#c2c2c2;font-weight:normal;font-family:'Liberation Sans', sans-serif;letter-spacing:-0.1px;">Animator</div>
<div class="t" style="left:731px;top:344.57px;font-size:11.3px;line-height:12.622px;color:#c2c2c2;font-weight:normal;font-family:'Liberation Sans', sans-serif;letter-spacing:-0.1px;">monthly</div>
<div class="t" style="left:814px;top:344.57px;font-size:11.3px;line-height:12.622px;color:#c2c2c2;font-weight:normal;font-family:'Liberation Sans', sans-serif;letter-spacing:-0.1px;">2229.50</div>
<div class="t" style="left:897px;top:344.57px;font-size:11.3px;line-height:12.622px;color:#c2c2c2;font-weight:normal;font-family:'Liberation Sans', sans-serif;letter-spacing:-0.1px;">5.00</div>
<div class="t" style="left:969px;top:344.57px;font-size:11.3px;line-height:12.622px;color:#c2c2c2;font-weight:normal;font-family:'Liberation Sans', sans-serif;letter-spacing:-0.1px;">9</div>
<div class="t" style="left:1040px;top:344.57px;font-size:11.3px;line-height:12.622px;color:#c2c2c2;font-weight:normal;font-family:'Liberation Sans', sans-serif;letter-spacing:-0.1px;">45.00</div>
<div class="t" style="left:1254px;top:344.57px;font-size:11.3px;line-height:12.622px;color:#c2c2c2;font-weight:normal;font-family:'Liberation Sans', sans-serif;letter-spacing:-0.1px;">15.00</div>
<div class="r" style="left:1326px;top:340px;width:25px;height:21px;box-sizing:border-box;background:#2a50d6;border:1px solid #3e7af8"></div>
<div class="r" style="left:1359px;top:340px;width:22px;height:21px;box-sizing:border-box;background:#1a7d39;border:1px solid #2ecc5e"></div>
<div class="r" style="left:1389px;top:340px;width:24px;height:21px;box-sizing:border-box;background:#0a87c8;border:1px solid #18aef0"></div>
<div class="r" style="left:1421px;top:340px;width:26px;height:21px;box-sizing:border-box;background:#c11d1d;border:1px solid #f03a3a"></div>
<svg class="r" style="left:1330px;top:343px" width="17" height="15" viewBox="0 0 17 15"><path fill="none" stroke="#fff" stroke-width="1.8" d="M8 3.2H2.8a1 1 0 0 0-1 1V12.2a1 1 0 0 0 1 1H11.2a1 1 0 0 0 1-1V8"/><path fill="#fff" d="M13.5 0.8l2.4 2.4-1.2 1.2-2.4-2.4z M11.6 2.7l2.4 2.4-6 6-3 .6.6-3z"/></svg>
<svg class="r" style="left:1363px;top:343px" width="14" height="15" viewBox="0 0 14 15"><circle cx="7" cy="7.5" r="6.4" fill="#fff"/><circle cx="7" cy="5.6" r="2.1" fill="#1a7d39"/><path d="M3 11.2c.8-1.6 2.3-2.2 4-2.2s3.2.6 4 2.2a5.4 5.4 0 0 1-8 0z" fill="#1a7d39"/></svg>
<svg class="r" style="left:1393px;top:343.5px" width="16" height="13" viewBox="0 0 16 13"><g fill="#fff"><rect x="0.8" y="1.2" width="2.6" height="2.6" rx=".8"/><rect x="0.8" y="5.2" width="2.6" height="2.6" rx=".8"/><rect x="0.8" y="9.2" width="2.6" height="2.6" rx=".8"/><rect x="5.2" y="1.6" width="9.6" height="1.9"/><rect x="5.2" y="5.6" width="9.6" height="1.9"/><rect x="5.2" y="9.6" width="9.6" height="1.9"/></g></svg>
<svg class="r" style="left:1424px;top:343px" width="20" height="15" viewBox="0 0 20 15"><circle cx="9.9" cy="3.6" r="3.2" fill="#fff"/><path d="M3.8 14c0-3.6 1.6-6.2 4-6.2h2.2c2.4 0 4 2.6 4 6.2z" fill="#fff"/><line x1="0.6" y1="0.4" x2="18.4" y2="13.6" stroke="#c11d1d" stroke-width="3.6"/><line x1="1.4" y1="1.0" x2="17.8" y2="13.2" stroke="#fff" stroke-width="1.8"/></svg>
<div class="t" style="left:62px;top:371.57px;font-size:11.3px;line-height:12.622px;color:#c2c2c2;font-weight:normal;font-family:'Liberation Sans', sans-serif;letter-spacing:-0.1px;">1983-05-20</div>
<div class="t" style="left:179px;top:371.57px;font-size:11.3px;line-height:12.622px;color:#c2c2c2;font-weight:normal;font-family:'Liberation Sans', sans-serif;letter-spacing:0.13px;">0831000271010</div>
<div class="t" style="left:340px;top:371.57px;font-size:11.3px;line-height:12.622px;color:#c2c2c2;font-weight:normal;font-family:'Liberation Sans', sans-serif;letter-spacing:-0.1px;">2011-09-01</div>
<div class="t" style="left:462px;top:371.57px;font-size:11.3px;line-height:12.622px;color:#c2c2c2;font-weight:normal;font-family:'Liberation Sans', sans-serif;letter-spacing:-0.1px;">elvis.presle...</div>
<div class="t" style="left:534px;top:371.57px;font-size:11.3px;line-height:12.622px;color:#c2c2c2;font-weight:normal;font-family:'Liberation Sans', sans-serif;letter-spacing:-0.1px;">Coordination</div>
<div class="t" style="left:660px;top:371.57px;font-size:11.3px;line-height:12.622px;color:#c2c2c2;font-weight:normal;font-family:'Liberation Sans', sans-serif;letter-spacing:-0.1px;">Scheduler</div>
<div class="t" style="left:731px;top:371.57px;font-size:11.3px;line-height:12.622px;color:#c2c2c2;font-weight:normal;font-family:'Liberation Sans', sans-serif;letter-spacing:-0.1px;">monthly</div>
<div class="t" style="left:814px;top:371.57px;font-size:11.3px;line-height:12.622px;color:#c2c2c2;font-weight:normal;font-family:'Liberation Sans', sans-serif;letter-spacing:-0.1px;">2325.06</div>
<div class="t" style="left:897px;top:371.57px;font-size:11.3px;line-height:12.622px;color:#c2c2c2;font-weight:normal;font-family:'Liberation Sans', sans-serif;letter-spacing:-0.1px;">5.00</div>
<div class="t" style="left:969px;top:371.57px;font-size:11.3px;line-height:12.622px;color:#c2c2c2;font-weight:normal;font-family:'Liberation Sans', sans-serif;letter-spacing:-0.1px;">9</div>
<div class="t" style="left:1040px;top:371.57px;font-size:11.3px;line-height:12.622px;color:#c2c2c2;font-weight:normal;font-family:'Liberation Sans', sans-serif;letter-spacing:-0.1px;">45.00</div>
<div class="t" style="left:1254px;top:371.57px;font-size:11.3px;line-height:12.622px;color:#c2c2c2;font-weight:normal;font-family:'Liberation Sans', sans-serif;letter-spacing:-0.1px;">15.00</div>
<div class="r" style="left:1326px;top:367px;width:25px;height:21px;box-sizing:border-box;background:#2a50d6;border:1px solid #3e7af8"></div>
<div class="r" style="left:1359px;top:367px;width:22px;height:21px;box-sizing:border-box;background:#1a7d39;border:1px solid #2ecc5e"></div>
<div class="r" style="left:1389px;top:367px;width:24px;height:21px;box-sizing:border-box;background:#0a87c8;border:1px solid #18aef0"></div>
<div class="r" style="left:1421px;top:367px;width:26px;height:21px;box-sizing:border-box;background:#c11d1d;border:1px solid #f03a3a"></div>
<svg class="r" style="left:1330px;top:370px" width="17" height="15" viewBox="0 0 17 15"><path fill="none" stroke="#fff" stroke-width="1.8" d="M8 3.2H2.8a1 1 0 0 0-1 1V12.2a1 1 0 0 0 1 1H11.2a1 1 0 0 0 1-1V8"/><path fill="#fff" d="M13.5 0.8l2.4 2.4-1.2 1.2-2.4-2.4z M11.6 2.7l2.4 2.4-6 6-3 .6.6-3z"/></svg>
<svg class="r" style="left:1363px;top:370px" width="14" height="15" viewBox="0 0 14 15"><circle cx="7" cy="7.5" r="6.4" fill="#fff"/><circle cx="7" cy="5.6" r="2.1" fill="#1a7d39"/><path d="M3 11.2c.8-1.6 2.3-2.2 4-2.2s3.2.6 4 2.2a5.4 5.4 0 0 1-8 0z" fill="#1a7d39"/></svg>
<svg class="r" style="left:1393px;top:370.5px" width="16" height="13" viewBox="0 0 16 13"><g fill="#fff"><rect x="0.8" y="1.2" width="2.6" height="2.6" rx=".8"/><rect x="0.8" y="5.2" width="2.6" height="2.6" rx=".8"/><rect x="0.8" y="9.2" width="2.6" height="2.6" rx=".8"/><rect x="5.2" y="1.6" width="9.6" height="1.9"/><rect x="5.2" y="5.6" width="9.6" height="1.9"/><rect x="5.2" y="9.6" width="9.6" height="1.9"/></g></svg>
<svg class="r" style="left:1424px;top:370px" width="20" height="15" viewBox="0 0 20 15"><circle cx="9.9" cy="3.6" r="3.2" fill="#fff"/><path d="M3.8 14c0-3.6 1.6-6.2 4-6.2h2.2c2.4 0 4 2.6 4 6.2z" fill="#fff"/><line x1="0.6" y1="0.4" x2="18.4" y2="13.6" stroke="#c11d1d" stroke-width="3.6"/><line x1="1.4" y1="1.0" x2="17.8" y2="13.2" stroke="#fff" stroke-width="1.8"/></svg>
<div class="t" style="left:62px;top:397.67px;font-size:11.3px;line-height:12.622px;color:#c2c2c2;font-weight:normal;font-family:'Liberation Sans', sans-serif;letter-spacing:-0.1px;">1971-03-27</div>
<div class="t" style="left:179px;top:397.67px;font-size:11.3px;line-height:12.622px;color:#c2c2c2;font-weight:normal;font-family:'Liberation Sans', sans-serif;letter-spacing:0.13px;">2102030771110</div>
<div class="t" style="left:340px;top:397.67px;font-size:11.3px;line-height:12.622px;color:#c2c2c2;font-weight:normal;font-family:'Liberation Sans', sans-serif;letter-spacing:-0.1px;">2011-09-10</div>
<div class="t" style="left:462px;top:397.67px;font-size:11.3px;line-height:12.622px;color:#c2c2c2;font-weight:normal;font-family:'Liberation Sans', sans-serif;letter-spacing:-0.1px;">eva.peron....</div>
<div class="t" style="left:534px;top:397.67px;font-size:11.3px;line-height:12.622px;color:#c2c2c2;font-weight:normal;font-family:'Liberation Sans', sans-serif;letter-spacing:-0.1px;">Coordination</div>
<div class="t" style="left:660px;top:397.67px;font-size:11.3px;line-height:12.622px;color:#c2c2c2;font-weight:normal;font-family:'Liberation Sans', sans-serif;letter-spacing:-0.1px;">Scheduler</div>
<div class="t" style="left:731px;top:397.67px;font-size:11.3px;line-height:12.622px;color:#c2c2c2;font-weight:normal;font-family:'Liberation Sans', sans-serif;letter-spacing:-0.1px;">monthly</div>
<div class="t" style="left:814px;top:397.67px;font-size:11.3px;line-height:12.622px;color:#c2c2c2;font-weight:normal;font-family:'Liberation Sans', sans-serif;letter-spacing:-0.1px;">4891.40</div>
<div class="t" style="left:897px;top:397.67px;font-size:11.3px;line-height:12.622px;color:#c2c2c2;font-weight:normal;font-family:'Liberation Sans', sans-serif;letter-spacing:-0.1px;">5.00</div>
<div class="t" style="left:969px;top:397.67px;font-size:11.3px;line-height:12.622px;color:#c2c2c2;font-weight:normal;font-family:'Liberation Sans', sans-serif;letter-spacing:-0.1px;">9</div>
<div class="t" style="left:1040px;top:397.67px;font-size:11.3px;line-height:12.622px;color:#c2c2c2;font-weight:normal;font-family:'Liberation Sans', sans-serif;letter-spacing:-0.1px;">45.00</div>
<div class="t" style="left:1254px;top:397.67px;font-size:11.3px;line-height:12.622px;color:#c2c2c2;font-weight:normal;font-family:'Liberation Sans', sans-serif;letter-spacing:-0.1px;">15.00</div>
<div class="r" style="left:1326px;top:394px;width:25px;height:21px;box-sizing:border-box;background:#2a50d6;border:1px solid #3e7af8"></div>
<div class="r" style="left:1359px;top:394px;width:22px;height:21px;box-sizing:border-box;background:#1a7d39;border:1px solid #2ecc5e"></div>
<div class="r" style="left:1389px;top:394px;width:24px;height:21px;box-sizing:border-box;background:#0a87c8;border:1px solid #18aef0"></div>
<div class="r" style="left:1421px;top:394px;width:26px;height:21px;box-sizing:border-box;background:#c11d1d;border:1px solid #f03a3a"></div>
<svg class="r" style="left:1330px;top:397px" width="17" height="15" viewBox="0 0 17 15"><path fill="none" stroke="#fff" stroke-width="1.8" d="M8 3.2H2.8a1 1 0 0 0-1 1V12.2a1 1 0 0 0 1 1H11.2a1 1 0 0 0 1-1V8"/><path fill="#fff" d="M13.5 0.8l2.4 2.4-1.2 1.2-2.4-2.4z M11.6 2.7l2.4 2.4-6 6-3 .6.6-3z"/></svg>
<svg class="r" style="left:1363px;top:397px" width="14" height="15" viewBox="0 0 14 15"><circle cx="7" cy="7.5" r="6.4" fill="#fff"/><circle cx="7" cy="5.6" r="2.1" fill="#1a7d39"/><path d="M3 11.2c.8-1.6 2.3-2.2 4-2.2s3.2.6 4 2.2a5.4 5.4 0 0 1-8 0z" fill="#1a7d39"/></svg>
<svg class="r" style="left:1393px;top:397.5px" width="16" height="13" viewBox="0 0 16 13"><g fill="#fff"><rect x="0.8" y="1.2" width="2.6" height="2.6" rx=".8"/><rect x="0.8" y="5.2" width="2.6" height="2.6" rx=".8"/><rect x="0.8" y="9.2" width="2.6" height="2.6" rx=".8"/><rect x="5.2" y="1.6" width="9.6" height="1.9"/><rect x="5.2" y="5.6" width="9.6" height="1.9"/><rect x="5.2" y="9.6" width="9.6" height="1.9"/></g></svg>
<svg class="r" style="left:1424px;top:397px" width="20" height="15" viewBox="0 0 20 15"><circle cx="9.9" cy="3.6" r="3.2" fill="#fff"/><path d="M3.8 14c0-3.6 1.6-6.2 4-6.2h2.2c2.4 0 4 2.6 4 6.2z" fill="#fff"/><line x1="0.6" y1="0.4" x2="18.4" y2="13.6" stroke="#c11d1d" stroke-width="3.6"/><line x1="1.4" y1="1.0" x2="17.8" y2="13.2" stroke="#fff" stroke-width="1.8"/></svg>
<div class="t" style="left:62px;top:424.57px;font-size:11.3px;line-height:12.622px;color:#c2c2c2;font-weight:normal;font-family:'Liberation Sans', sans-serif;letter-spacing:-0.1px;">1986-11-28</div>
<div class="t" style="left:179px;top:424.57px;font-size:11.3px;line-height:12.622px;color:#c2c2c2;font-weight:normal;font-family:'Liberation Sans', sans-serif;letter-spacing:0.13px;">1201689031061</div>
<div class="t" style="left:340px;top:424.57px;font-size:11.3px;line-height:12.622px;color:#c2c2c2;font-weight:normal;font-family:'Liberation Sans', sans-serif;letter-spacing:-0.1px;">2016-02-03</div>
<div class="t" style="left:462px;top:424.57px;font-size:11.3px;line-height:12.622px;color:#c2c2c2;font-weight:normal;font-family:'Liberation Sans', sans-serif;letter-spacing:-0.1px;">leo.tolstoy....</div>
<div class="t" style="left:534px;top:424.57px;font-size:11.3px;line-height:12.622px;color:#c2c2c2;font-weight:normal;font-family:'Liberation Sans', sans-serif;letter-spacing:-0.1px;">Props</div>
<div class="t" style="left:660px;top:424.57px;font-size:11.3px;line-height:12.622px;color:#c2c2c2;font-weight:normal;font-family:'Liberation Sans', sans-serif;letter-spacing:-0.1px;">Driver</div>
<div class="t" style="left:731px;top:424.57px;font-size:11.3px;line-height:12.622px;color:#c2c2c2;font-weight:normal;font-family:'Liberation Sans', sans-serif;letter-spacing:-0.1px;">monthly</div>
<div class="t" style="left:814px;top:424.57px;font-size:11.3px;line-height:12.622px;color:#c2c2c2;font-weight:normal;font-family:'Liberation Sans', sans-serif;letter-spacing:-0.1px;">1576.80</div>
<div class="t" style="left:897px;top:424.57px;font-size:11.3px;line-height:12.622px;color:#c2c2c2;font-weight:normal;font-family:'Liberation Sans', sans-serif;letter-spacing:-0.1px;">5.00</div>
<div class="t" style="left:969px;top:424.57px;font-size:11.3px;line-height:12.622px;color:#c2c2c2;font-weight:normal;font-family:'Liberation Sans', sans-serif;letter-spacing:-0.1px;">9</div>
<div class="t" style="left:1040px;top:424.57px;font-size:11.3px;line-height:12.622px;color:#c2c2c2;font-weight:normal;font-family:'Liberation Sans', sans-serif;letter-spacing:-0.1px;">45.00</div>
<div class="t" style="left:1254px;top:424.57px;font-size:11.3px;line-height:12.622px;color:#c2c2c2;font-weight:normal;font-family:'Liberation Sans', sans-serif;letter-spacing:-0.1px;">15.00</div>
<div class="r" style="left:1326px;top:420px;width:25px;height:21px;box-sizing:border-box;background:#2a50d6;border:1px solid #3e7af8"></div>
<div class="r" style="left:1359px;top:420px;width:22px;height:21px;box-sizing:border-box;background:#1a7d39;border:1px solid #2ecc5e"></div>
<div class="r" style="left:1389px;top:420px;width:24px;height:21px;box-sizing:border-box;background:#0a87c8;border:1px solid #18aef0"></div>
<div class="r" style="left:1421px;top:420px;width:26px;height:21px;box-sizing:border-box;background:#c11d1d;border:1px solid #f03a3a"></div>
<svg class="r" style="left:1330px;top:423px" width="17" height="15" viewBox="0 0 17 15"><path fill="none" stroke="#fff" stroke-width="1.8" d="M8 3.2H2.8a1 1 0 0 0-1 1V12.2a1 1 0 0 0 1 1H11.2a1 1 0 0 0 1-1V8"/><path fill="#fff" d="M13.5 0.8l2.4 2.4-1.2 1.2-2.4-2.4z M11.6 2.7l2.4 2.4-6 6-3 .6.6-3z"/></svg>
<svg class="r" style="left:1363px;top:423px" width="14" height="15" viewBox="0 0 14 15"><circle cx="7" cy="7.5" r="6.4" fill="#fff"/><circle cx="7" cy="5.6" r="2.1" fill="#1a7d39"/><path d="M3 11.2c.8-1.6 2.3-2.2 4-2.2s3.2.6 4 2.2a5.4 5.4 0 0 1-8 0z" fill="#1a7d39"/></svg>
<svg class="r" style="left:1393px;top:423.5px" width="16" height="13" viewBox="0 0 16 13"><g fill="#fff"><rect x="0.8" y="1.2" width="2.6" height="2.6" rx=".8"/><rect x="0.8" y="5.2" width="2.6" height="2.6" rx=".8"/><rect x="0.8" y="9.2" width="2.6" height="2.6" rx=".8"/><rect x="5.2" y="1.6" width="9.6" height="1.9"/><rect x="5.2" y="5.6" width="9.6" height="1.9"/><rect x="5.2" y="9.6" width="9.6" height="1.9"/></g></svg>
<svg class="r" style="left:1424px;top:423px" width="20" height="15" viewBox="0 0 20 15"><circle cx="9.9" cy="3.6" r="3.2" fill="#fff"/><path d="M3.8 14c0-3.6 1.6-6.2 4-6.2h2.2c2.4 0 4 2.6 4 6.2z" fill="#fff"/><line x1="0.6" y1="0.4" x2="18.4" y2="13.6" stroke="#c11d1d" stroke-width="3.6"/><line x1="1.4" y1="1.0" x2="17.8" y2="13.2" stroke="#fff" stroke-width="1.8"/></svg>
<div class="t" style="left:62px;top:451.57px;font-size:11.3px;line-height:12.622px;color:#c2c2c2;font-weight:normal;font-family:'Liberation Sans', sans-serif;letter-spacing:-0.1px;">1980-07-23</div>
<div class="t" style="left:179px;top:451.57px;font-size:11.3px;line-height:12.622px;color:#c2c2c2;font-weight:normal;font-family:'Liberation Sans', sans-serif;letter-spacing:0.13px;">0412703063180</div>
<div class="t" style="left:340px;top:451.57px;font-size:11.3px;line-height:12.622px;color:#c2c2c2;font-weight:normal;font-family:'Liberation Sans', sans-serif;letter-spacing:-0.1px;">2016-02-04</div>
<div class="t" style="left:462px;top:451.57px;font-size:11.3px;line-height:12.622px;color:#c2c2c2;font-weight:normal;font-family:'Liberation Sans', sans-serif;letter-spacing:-0.1px;">louis.pasteu...</div>
<div class="t" style="left:534px;top:451.57px;font-size:11.3px;line-height:12.622px;color:#c2c2c2;font-weight:normal;font-family:'Liberation Sans', sans-serif;letter-spacing:-0.1px;">Props</div>
<div class="t" style="left:660px;top:451.57px;font-size:11.3px;line-height:12.622px;color:#c2c2c2;font-weight:normal;font-family:'Liberation Sans', sans-serif;letter-spacing:-0.1px;">Animator</div>
<div class="t" style="left:731px;top:451.57px;font-size:11.3px;line-height:12.622px;color:#c2c2c2;font-weight:normal;font-family:'Liberation Sans', sans-serif;letter-spacing:-0.1px;">monthly</div>
<div class="t" style="left:814px;top:451.57px;font-size:11.3px;line-height:12.622px;color:#c2c2c2;font-weight:normal;font-family:'Liberation Sans', sans-serif;letter-spacing:-0.1px;">1537.20</div>
<div class="t" style="left:897px;top:451.57px;font-size:11.3px;line-height:12.622px;color:#c2c2c2;font-weight:normal;font-family:'Liberation Sans', sans-serif;letter-spacing:-0.1px;">5.00</div>
<div class="t" style="left:969px;top:451.57px;font-size:11.3px;line-height:12.622px;color:#c2c2c2;font-weight:normal;font-family:'Liberation Sans', sans-serif;letter-spacing:-0.1px;">9</div>
<div class="t" style="left:1040px;top:451.57px;font-size:11.3px;line-height:12.622px;color:#c2c2c2;font-weight:normal;font-family:'Liberation Sans', sans-serif;letter-spacing:-0.1px;">45.00</div>
<div class="t" style="left:1111px;top:451.57px;font-size:11.3px;line-height:12.622px;color:#c2c2c2;font-weight:normal;font-family:'Liberation Sans', sans-serif;letter-spacing:-0.1px;">Casual</div>
<div class="r" style="left:1326px;top:447px;width:25px;height:21px;box-sizing:border-box;background:#2a50d6;border:1px solid #3e7af8"></div>
<div class="r" style="left:1359px;top:447px;width:22px;height:21px;box-sizing:border-box;background:#1a7d39;border:1px solid #2ecc5e"></div>
<div class="r" style="left:1389px;top:447px;width:24px;height:21px;box-sizing:border-box;background:#0a87c8;border:1px solid #18aef0"></div>
<div class="r" style="left:1421px;top:447px;width:26px;height:21px;box-sizing:border-box;background:#c11d1d;border:1px solid #f03a3a"></div>
<svg class="r" style="left:1330px;top:450px" width="17" height="15" viewBox="0 0 17 15"><path fill="none" stroke="#fff" stroke-width="1.8" d="M8 3.2H2.8a1 1 0 0 0-1 1V12.2a1 1 0 0 0 1 1H11.2a1 1 0 0 0 1-1V8"/><path fill="#fff" d="M13.5 0.8l2.4 2.4-1.2 1.2-2.4-2.4z M11.6 2.7l2.4 2.4-6 6-3 .6.6-3z"/></svg>
<svg class="r" style="left:1363px;top:450px" width="14" height="15" viewBox="0 0 14 15"><circle cx="7" cy="7.5" r="6.4" fill="#fff"/><circle cx="7" cy="5.6" r="2.1" fill="#1a7d39"/><path d="M3 11.2c.8-1.6 2.3-2.2 4-2.2s3.2.6 4 2.2a5.4 5.4 0 0 1-8 0z" fill="#1a7d39"/></svg>
<svg class="r" style="left:1393px;top:450.5px" width="16" height="13" viewBox="0 0 16 13"><g fill="#fff"><rect x="0.8" y="1.2" width="2.6" height="2.6" rx=".8"/><rect x="0.8" y="5.2" width="2.6" height="2.6" rx=".8"/><rect x="0.8" y="9.2" width="2.6" height="2.6" rx=".8"/><rect x="5.2" y="1.6" width="9.6" height="1.9"/><rect x="5.2" y="5.6" width="9.6" height="1.9"/><rect x="5.2" y="9.6" width="9.6" height="1.9"/></g></svg>
<svg class="r" style="left:1424px;top:450px" width="20" height="15" viewBox="0 0 20 15"><circle cx="9.9" cy="3.6" r="3.2" fill="#fff"/><path d="M3.8 14c0-3.6 1.6-6.2 4-6.2h2.2c2.4 0 4 2.6 4 6.2z" fill="#fff"/><line x1="0.6" y1="0.4" x2="18.4" y2="13.6" stroke="#c11d1d" stroke-width="3.6"/><line x1="1.4" y1="1.0" x2="17.8" y2="13.2" stroke="#fff" stroke-width="1.8"/></svg>
<div class="t" style="left:-3px;top:478.39px;font-size:11.5px;line-height:12.846px;color:#c2c2c2;font-weight:normal;font-family:'Liberation Sans', sans-serif;letter-spacing:-0.2px;">en</div>
<div class="t" style="left:62px;top:478.57px;font-size:11.3px;line-height:12.622px;color:#c2c2c2;font-weight:normal;font-family:'Liberation Sans', sans-serif;letter-spacing:-0.1px;">1977-01-27</div>
<div class="t" style="left:179px;top:478.57px;font-size:11.3px;line-height:12.622px;color:#c2c2c2;font-weight:normal;font-family:'Liberation Sans', sans-serif;letter-spacing:0.13px;">7110131002771</div>
<div class="t" style="left:340px;top:478.57px;font-size:11.3px;line-height:12.622px;color:#c2c2c2;font-weight:normal;font-family:'Liberation Sans', sans-serif;letter-spacing:-0.1px;">2011-09-01</div>
<div class="t" style="left:462px;top:478.57px;font-size:11.3px;line-height:12.622px;color:#c2c2c2;font-weight:normal;font-family:'Liberation Sans', sans-serif;letter-spacing:-0.1px;">ludwig.beet...</div>
<div class="t" style="left:534px;top:478.57px;font-size:11.3px;line-height:12.622px;color:#c2c2c2;font-weight:normal;font-family:'Liberation Sans', sans-serif;letter-spacing:-0.1px;">Marketing</div>
<div class="t" style="left:660px;top:478.57px;font-size:11.3px;line-height:12.622px;color:#c2c2c2;font-weight:normal;font-family:'Liberation Sans', sans-serif;letter-spacing:-0.1px;">Scheduler</div>
<div class="t" style="left:731px;top:478.57px;font-size:11.3px;line-height:12.622px;color:#c2c2c2;font-weight:normal;font-family:'Liberation Sans', sans-serif;letter-spacing:-0.1px;">monthly</div>
<div class="t" style="left:814px;top:478.57px;font-size:11.3px;line-height:12.622px;color:#c2c2c2;font-weight:normal;font-family:'Liberation Sans', sans-serif;letter-spacing:-0.1px;">2004.03</div>
<div class="t" style="left:897px;top:478.57px;font-size:11.3px;line-height:12.622px;color:#c2c2c2;font-weight:normal;font-family:'Liberation Sans', sans-serif;letter-spacing:-0.1px;">5.00</div>
<div class="t" style="left:969px;top:478.57px;font-size:11.3px;line-height:12.622px;color:#c2c2c2;font-weight:normal;font-family:'Liberation Sans', sans-serif;letter-spacing:-0.1px;">9</div>
<div class="t" style="left:1040px;top:478.57px;font-size:11.3px;line-height:12.622px;color:#c2c2c2;font-weight:normal;font-family:'Liberation Sans', sans-serif;letter-spacing:-0.1px;">45.00</div>
<div class="t" style="left:1254px;top:478.57px;font-size:11.3px;line-height:12.622px;color:#c2c2c2;font-weight:normal;font-family:'Liberation Sans', sans-serif;letter-spacing:-0.1px;">15.00</div>
<div class="r" style="left:1326px;top:474px;width:25px;height:21px;box-sizing:border-box;background:#2a50d6;border:1px solid #3e7af8"></div>
<div class="r" style="left:1359px;top:474px;width:22px;height:21px;box-sizing:border-box;background:#1a7d39;border:1px solid #2ecc5e"></div>
<div class="r" style="left:1389px;top:474px;width:24px;height:21px;box-sizing:border-box;background:#0a87c8;border:1px solid #18aef0"></div>
<div class="r" style="left:1421px;top:474px;width:26px;height:21px;box-sizing:border-box;background:#c11d1d;border:1px solid #f03a3a"></div>
<svg class="r" style="left:1330px;top:477px" width="17" height="15" viewBox="0 0 17 15"><path fill="none" stroke="#fff" stroke-width="1.8" d="M8 3.2H2.8a1 1 0 0 0-1 1V12.2a1 1 0 0 0 1 1H11.2a1 1 0 0 0 1-1V8"/><path fill="#fff" d="M13.5 0.8l2.4 2.4-1.2 1.2-2.4-2.4z M11.6 2.7l2.4 2.4-6 6-3 .6.6-3z"/></svg>
<svg class="r" style="left:1363px;top:477px" width="14" height="15" viewBox="0 0 14 15"><circle cx="7" cy="7.5" r="6.4" fill="#fff"/><circle cx="7" cy="5.6" r="2.1" fill="#1a7d39"/><path d="M3 11.2c.8-1.6 2.3-2.2 4-2.2s3.2.6 4 2.2a5.4 5.4 0 0 1-8 0z" fill="#1a7d39"/></svg>
<svg class="r" style="left:1393px;top:477.5px" width="16" height="13" viewBox="0 0 16 13"><g fill="#fff"><rect x="0.8" y="1.2" width="2.6" height="2.6" rx=".8"/><rect x="0.8" y="5.2" width="2.6" height="2.6" rx=".8"/><rect x="0.8" y="9.2" width="2.6" height="2.6" rx=".8"/><rect x="5.2" y="1.6" width="9.6" height="1.9"/><rect x="5.2" y="5.6" width="9.6" height="1.9"/><rect x="5.2" y="9.6" width="9.6" height="1.9"/></g></svg>
<svg class="r" style="left:1424px;top:477px" width="20" height="15" viewBox="0 0 20 15"><circle cx="9.9" cy="3.6" r="3.2" fill="#fff"/><path d="M3.8 14c0-3.6 1.6-6.2 4-6.2h2.2c2.4 0 4 2.6 4 6.2z" fill="#fff"/><line x1="0.6" y1="0.4" x2="18.4" y2="13.6" stroke="#c11d1d" stroke-width="3.6"/><line x1="1.4" y1="1.0" x2="17.8" y2="13.2" stroke="#fff" stroke-width="1.8"/></svg>
<svg class="r" style="left:0;top:0" width="1488" height="496" viewBox="0 0 1488 496"><path fill="#fff" d="M248 375.4 L457.3 260.4 Q436.6 252.1 428.7 241 C463.7 246.25 501.9 235.05 536.9 227 Q496.1 261.7 465.1 308.2 Q459.6 290.65 465.7 272.5 L253 385.3 Z"/></svg>
</body></html>
